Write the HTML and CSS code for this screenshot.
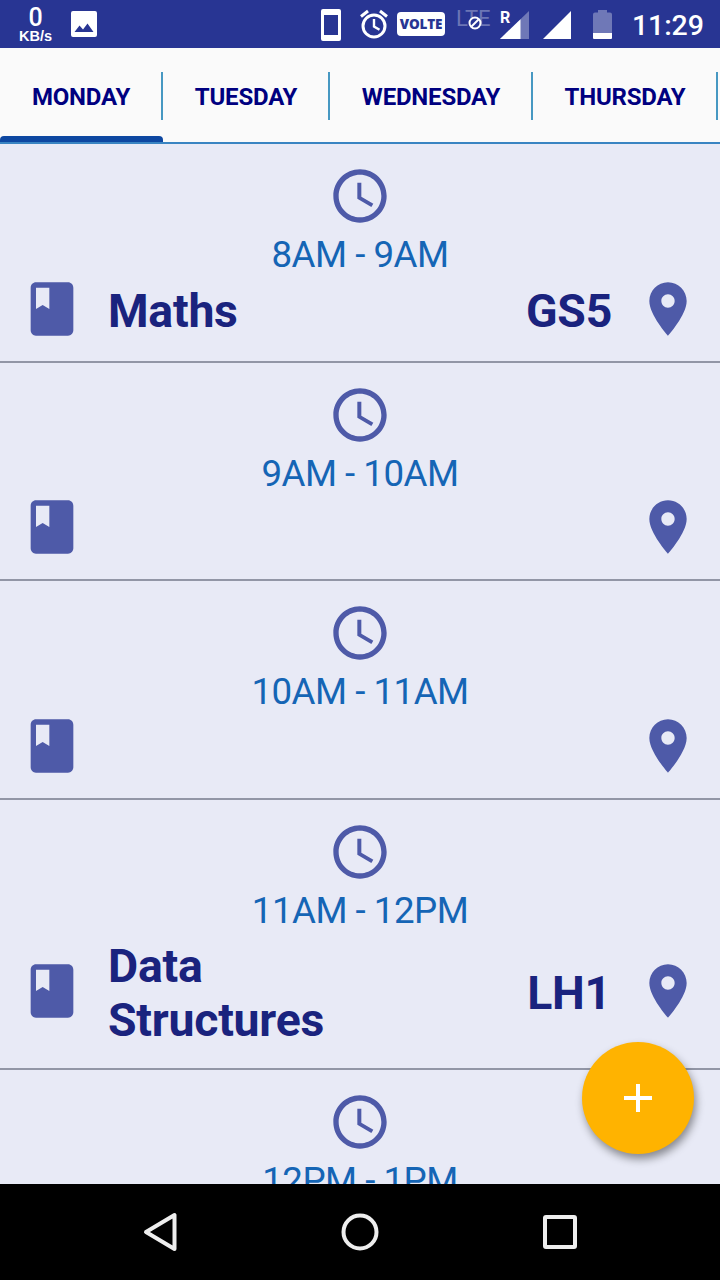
FILE: index.html
```html
<!DOCTYPE html>
<html lang="en">
<head>
<meta charset="utf-8">
<title>Timetable</title>
<link rel="stylesheet" href="styles.css">
</head>
<body>
<svg class="defs" aria-hidden="true">
  <symbol id="clock" viewBox="0 0 24 24"><path d="M11.99 2C6.47 2 2 6.48 2 12s4.47 10 9.99 10C17.52 22 22 17.52 22 12S17.52 2 11.99 2zM12 20c-4.42 0-8-3.58-8-8s3.58-8 8-8 8 3.58 8 8-3.58 8-8 8zm.5-13H11v6l5.25 3.15.75-1.23-4.5-2.67z"/></symbol>
  <symbol id="book" viewBox="0 0 24 24"><path d="M18 2H6c-1.1 0-2 .9-2 2v16c0 1.1.9 2 2 2h12c1.1 0 2-.9 2-2V4c0-1.100-.9-2-2-2zM6 4h5v8l-2.500-1.500L6 12V4z"/></symbol>
  <symbol id="place" viewBox="0 0 24 24"><path d="M12 2C8.130 2 5 5.130 5 9c0 5.250 7 13 7 13s7-7.750 7-13c0-3.870-3.130-7-7-7zm0 9.500c-1.380 0-2.500-1.120-2.500-2.500s1.120-2.500 2.500-2.500 2.500 1.120 2.500 2.500-1.120 2.500-2.500 2.500z"/></symbol>
</svg>
<div class="screen">
  <header class="status">
    <div class="speed"><span class="speed-value">0</span><span class="speed-unit">KB/s</span></div>
    <svg class="photo" width="26" height="26" viewBox="0 0 26 26"><path fill="#fff" fill-rule="evenodd" d="M2 0h22a2 2 0 0 1 2 2v22a2 2 0 0 1-2 2H2a2 2 0 0 1-2-2V2a2 2 0 0 1 2-2zM3.500 21h19l-6-8.500-4.500 6-3.500-4z"/></svg>
    <svg class="phone" width="20" height="32" viewBox="0 0 20 32"><path fill="#fff" fill-rule="evenodd" d="M2 0h16a2 2 0 0 1 2 2v28a2 2 0 0 1-2 2H2a2 2 0 0 1-2-2V2a2 2 0 0 1 2-2zM3 6v20h14V6z"/></svg>
    <svg class="alarm" width="28" height="30" viewBox="0 0 28 30"><g fill="none" stroke="#fff" stroke-width="3"><circle cx="14" cy="17" r="11"/><path d="M1 7.500 8 2M20 2l7 5.500"/><path stroke-width="2.400" d="M14 10v7.500l5.500 3.300"/></g></svg>
    <span class="volte">VOLTE</span>
    <div class="lte"><span>LTE</span><svg class="blocked" width="14" height="14" viewBox="0 0 14 14"><circle cx="7" cy="7" r="5.500" fill="#283593" stroke="#fff" stroke-width="2"/><path d="M3.500 10.500l7-7" stroke="#fff" stroke-width="2"/></svg></div>
    <div class="roaming"><span class="roaming-label">R</span><svg width="29" height="28" viewBox="0 0 29 28"><path fill="#6f78b7" d="M29 0v28H0z"/><path fill="#fff" d="M20.500 8.200V28H0z"/></svg></div>
    <svg class="signal" width="28" height="28" viewBox="0 0 28 28"><path fill="#fff" d="M28 0v28H0z"/></svg>
    <svg class="battery" width="19" height="30" viewBox="0 0 19 30"><path fill="#6f78b7" d="M5 0h9v2.500h3a2 2 0 0 1 2 2V24H0V4.500a2 2 0 0 1 2-2h3z"/><path fill="#fff" d="M0 23h19v5a1 1 0 0 1-1 1H1a1 1 0 0 1-1-1z"/></svg>
    <span class="time">11:29</span>
  </header>
  <nav class="tabs">
    <a class="tab monday active">MONDAY</a>
    <a class="tab tuesday">TUESDAY</a>
    <a class="tab wednesday">WEDNESDAY</a>
    <a class="tab thursday">THURSDAY</a>
  </nav>
  <main class="list">
    <section class="slot">
      <svg class="icon"><use href="#clock"/></svg>
      <div class="hours">8AM - 9AM</div>
      <div class="details"><svg class="icon"><use href="#book"/></svg><div class="subject">Maths</div><div class="room">GS5</div><svg class="icon"><use href="#place"/></svg></div>
    </section>
    <section class="slot">
      <svg class="icon"><use href="#clock"/></svg>
      <div class="hours">9AM - 10AM</div>
      <div class="details"><svg class="icon"><use href="#book"/></svg><div class="subject"></div><div class="room"></div><svg class="icon"><use href="#place"/></svg></div>
    </section>
    <section class="slot">
      <svg class="icon"><use href="#clock"/></svg>
      <div class="hours">10AM - 11AM</div>
      <div class="details"><svg class="icon"><use href="#book"/></svg><div class="subject"></div><div class="room"></div><svg class="icon"><use href="#place"/></svg></div>
    </section>
    <section class="slot tall">
      <svg class="icon"><use href="#clock"/></svg>
      <div class="hours">11AM - 12PM</div>
      <div class="details"><svg class="icon"><use href="#book"/></svg><div class="subject">Data Structures</div><div class="room">LH1</div><svg class="icon"><use href="#place"/></svg></div>
    </section>
    <section class="slot">
      <svg class="icon"><use href="#clock"/></svg>
      <div class="hours">12PM - 1PM</div>
    </section>
  </main>
  <button class="fab" aria-label="Add"><svg width="28" height="28" viewBox="0 0 28 28"><path fill="#fff" d="M12 0h4v12h12v4H16v12h-4V16H0v-4h12z"/></svg></button>
  <footer class="navbar">
    <svg width="200" height="96" viewBox="60 0 200 96"><path d="M146 48l28.500-17v34z"/></svg>
    <svg width="200" height="96" viewBox="260 0 200 96"><circle cx="360" cy="48" r="16.500"/></svg>
    <svg width="200" height="96" viewBox="460 0 200 96"><rect x="545" y="33" width="30" height="30" rx="1"/></svg>
  </footer>
</div>
</body>
</html>
```
FILE: styles.css
```css
* { box-sizing: border-box; }
body { margin: 0; font-family: Roboto, "Liberation Sans", sans-serif; }
.defs { position: absolute; width: 0; height: 0; }
.screen { position: relative; display: flex; flex-direction: column; width: 720px; height: 1280px; overflow: hidden; background: #e8eaf6; }
svg { display: block; flex: none; }

.status { display: flex; flex: none; align-items: flex-start; height: 48px; background: #283593; color: #fff; }
.status > * { flex: none; }
.speed { display: flex; flex-direction: column; align-items: center; width: 71px; padding-top: 6px; font-weight: 700; }
.speed-value { font-size: 25px; line-height: 23px; font-weight: 500; }
.speed-unit { font-family: "Liberation Sans", sans-serif; font-size: 14.500px; line-height: 14px; }
.photo { margin-top: 11px; }
.phone { margin: 9px 0 0 224px; }
.alarm { margin: 9px 0 0 19px; }
.volte { width: 48px; height: 24px; margin: 12px 0 0 9px; border-radius: 4px; background: #fff; color: #283593; font: 800 13.500px/24px "Open Sans", sans-serif; text-align: center; letter-spacing: -.2px; }
.lte { position: relative; width: 35px; height: 20px; margin: 6px 0 0 11px; color: #6c75b5; font-size: 22px; line-height: 25px; }
.blocked { position: absolute; left: 12px; top: 10px; }
.roaming { position: relative; margin: 11px 0 0 9px; }
.roaming-label { position: absolute; left: 0; top: -2px; font-size: 16px; line-height: 18px; font-weight: 700; }
.signal { margin: 11px 0 0 14px; }
.battery { margin: 10px 0 0 22px; }
.time { margin-left: 20px; padding-top: 8px; font-size: 28.500px; line-height: 35px; font-weight: 500; letter-spacing: -.1px; white-space: nowrap; }

.tabs { display: flex; flex: none; height: 96px; border-bottom: 2px solid #3984c2; background: #fafafa; }
.tab { position: relative; display: flex; flex: none; align-items: center; justify-content: center; padding: 4px 1px 0 0; color: #000080; font-size: 24px; font-weight: 700; letter-spacing: -.2px; background: linear-gradient(#4798c2, #4798c2) right 24px / 2px 48px no-repeat; }
.active::after { content: ""; position: absolute; left: 0; right: 0; bottom: 0; height: 6px; border-radius: 4px 4px 0 0; background: #0d47a1; }
.monday { width: 163px; }
.tuesday { width: 167px; }
.wednesday { width: 203px; }
.thursday { width: 185px; }

.list { flex: 1; min-height: 0; overflow: hidden; }
.slot { display: flex; flex-direction: column; align-items: center; height: 218.670px; padding-top: 20px; border-bottom: 2px solid #9296a6; }
.tall { height: 270px; }
.icon { width: 64px; height: 64px; fill: #4e5aa8; }
.hours { height: 48.500px; color: #1565b5; font-size: 36.700px; line-height: 54px; letter-spacing: -.5px; white-space: nowrap; }
.details { display: flex; align-items: center; width: 100%; padding: 0 20px; color: #1a237e; font-size: 46.400px; line-height: 54px; font-weight: 700; letter-spacing: -.25px; }
.subject { width: 300px; margin-left: 24px; padding: 5px 80px 0 0; }
.room { width: 136px; margin-left: 93px; margin-right: -1px; padding-top: 4px; text-align: center; }
.tall .details { padding-top: 2px; }

.fab { position: absolute; left: 582px; top: 1042px; display: flex; align-items: center; justify-content: center; width: 112px; height: 112px; padding: 0; border: 0; border-radius: 50%; background: #ffb300; box-shadow: 2px 5px 8px rgba(0, 0, 0, .42); }
.navbar { display: flex; flex: none; justify-content: center; height: 96px; background: #000; }
.navbar svg { fill: none; stroke: #eee; stroke-width: 4; stroke-linejoin: round; }
```
